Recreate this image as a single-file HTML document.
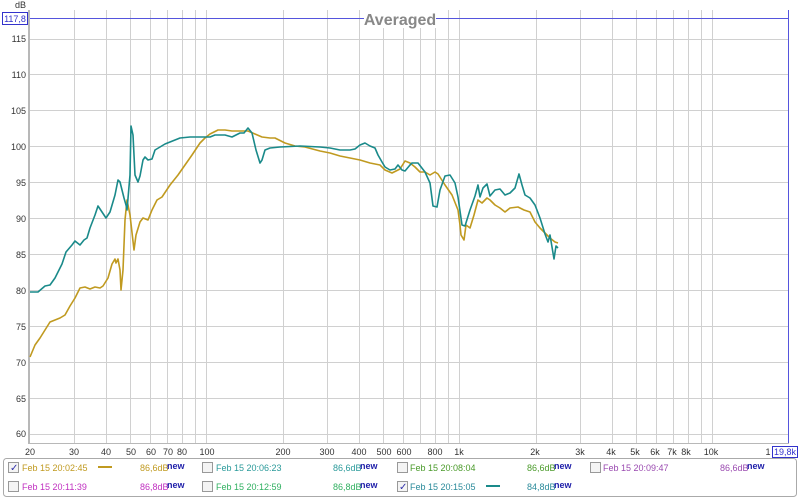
<!DOCTYPE html>
<html><head><meta charset="utf-8"><style>
body{margin:0;width:800px;height:499px;background:#fff;overflow:hidden;font-family:"Liberation Sans",Arial,sans-serif;}
</style></head><body>
<svg width="800" height="499" xmlns="http://www.w3.org/2000/svg" style="position:absolute;left:0;top:0">
<g stroke="#d0d0d0" stroke-width="1">
<line x1="74.5" y1="10" x2="74.5" y2="443"/><line x1="106.5" y1="10" x2="106.5" y2="443"/><line x1="130.5" y1="10" x2="130.5" y2="443"/><line x1="150.5" y1="10" x2="150.5" y2="443"/><line x1="167.5" y1="10" x2="167.5" y2="443"/><line x1="182.5" y1="10" x2="182.5" y2="443"/><line x1="195.5" y1="10" x2="195.5" y2="443"/><line x1="206.5" y1="10" x2="206.5" y2="443"/><line x1="283.5" y1="10" x2="283.5" y2="443"/><line x1="327.5" y1="10" x2="327.5" y2="443"/><line x1="359.5" y1="10" x2="359.5" y2="443"/><line x1="383.5" y1="10" x2="383.5" y2="443"/><line x1="403.5" y1="10" x2="403.5" y2="443"/><line x1="420.5" y1="10" x2="420.5" y2="443"/><line x1="435.5" y1="10" x2="435.5" y2="443"/><line x1="448.5" y1="10" x2="448.5" y2="443"/><line x1="459.5" y1="10" x2="459.5" y2="443"/><line x1="536.5" y1="10" x2="536.5" y2="443"/><line x1="580.5" y1="10" x2="580.5" y2="443"/><line x1="612.5" y1="10" x2="612.5" y2="443"/><line x1="636.5" y1="10" x2="636.5" y2="443"/><line x1="656.5" y1="10" x2="656.5" y2="443"/><line x1="673.5" y1="10" x2="673.5" y2="443"/><line x1="688.5" y1="10" x2="688.5" y2="443"/><line x1="701.5" y1="10" x2="701.5" y2="443"/><line x1="712.5" y1="10" x2="712.5" y2="443"/>
<line x1="30" y1="39.5" x2="789" y2="39.5"/><line x1="30" y1="74.5" x2="789" y2="74.5"/><line x1="30" y1="110.5" x2="789" y2="110.5"/><line x1="30" y1="146.5" x2="789" y2="146.5"/><line x1="30" y1="182.5" x2="789" y2="182.5"/><line x1="30" y1="218.5" x2="789" y2="218.5"/><line x1="30" y1="254.5" x2="789" y2="254.5"/><line x1="30" y1="290.5" x2="789" y2="290.5"/><line x1="30" y1="326.5" x2="789" y2="326.5"/><line x1="30" y1="362.5" x2="789" y2="362.5"/><line x1="30" y1="398.5" x2="789" y2="398.5"/><line x1="30" y1="434.5" x2="789" y2="434.5"/>
</g>
<line x1="29" y1="10" x2="29" y2="444" stroke="#b8b8b8" stroke-width="2"/>
<line x1="28" y1="443.5" x2="789" y2="443.5" stroke="#b8b8b8" stroke-width="1"/>
<line x1="30" y1="18.5" x2="789" y2="18.5" stroke="#5555dd" stroke-width="1"/>
<line x1="788.5" y1="10" x2="788.5" y2="443" stroke="#5555dd" stroke-width="1"/>
<rect x="364" y="10" width="72" height="18" fill="#fff"/>
<text x="400" y="25" text-anchor="middle" font-size="16" font-weight="bold" fill="#888">Averaged</text>
<g font-size="9" fill="#333" text-anchor="end">
<text x="26" y="8" >dB</text>
<text x="26" y="42">115</text><text x="26" y="78">110</text><text x="26" y="114">105</text><text x="26" y="150">100</text><text x="26" y="186">95</text><text x="26" y="222">90</text><text x="26" y="258">85</text><text x="26" y="294">80</text><text x="26" y="330">75</text><text x="26" y="366">70</text><text x="26" y="402">65</text><text x="26" y="437">60</text>
</g>
<rect x="2.5" y="12.5" width="25" height="12" fill="#fff" stroke="#3333cc"/>
<text x="15" y="22" text-anchor="middle" font-size="9" fill="#3333cc">117,8</text>
<g font-size="9" fill="#333" text-anchor="middle">
<text x="30" y="455">20</text><text x="74" y="455">30</text><text x="106" y="455">40</text><text x="131" y="455">50</text><text x="151" y="455">60</text><text x="168" y="455">70</text><text x="182" y="455">80</text><text x="207" y="455">100</text><text x="283" y="455">200</text><text x="327" y="455">300</text><text x="359" y="455">400</text><text x="384" y="455">500</text><text x="404" y="455">600</text><text x="435" y="455">800</text><text x="459" y="455">1k</text><text x="535" y="455">2k</text><text x="580" y="455">3k</text><text x="611" y="455">4k</text><text x="635" y="455">5k</text><text x="655" y="455">6k</text><text x="672" y="455">7k</text><text x="686" y="455">8k</text><text x="711" y="455">10k</text><text x="768" y="455">1</text>
</g>
<rect x="772.5" y="446.5" width="25" height="11" fill="#fff" stroke="#3333cc"/>
<text x="785" y="455" text-anchor="middle" font-size="9" fill="#3333cc">19,8k</text>
<polyline fill="none" stroke="#c09a20" stroke-width="1.6" stroke-linejoin="round" points="30,357 35,345 40,338 45,330 50,322 55,320 60,318 65,315 70,306 75,298 80,288 85,287 90,289 95,287 100,288 103,286 108,278 112,264 115,259 116,263 118,259 120,270 121,290 123,270 125,220 127,200 130,215 134,250 136,235 140,222 143,218 148,220 152,210 157,200 162,197 170,185 178,175 185,165 192,155 200,143 205,138 210,134 218,130 225,130 232,131 240,131 248,131 255,134 262,137 270,138 275,138 285,143 295,146 305,147 320,151 330,153 340,156 350,158 360,160 370,163 380,165 385,170 392,173 400,169 405,161 410,163 415,167 420,172 425,172 430,175 435,172 438,174 445,185 452,195 458,210 460,225 461,235 464,240 466,225 470,228 474,215 478,200 482,203 487,198 490,200 495,205 500,208 505,212 510,208 518,207 524,210 530,212 535,222 540,228 545,233 550,238 555,242 558,243"/>
<polyline fill="none" stroke="#1a8a8a" stroke-width="1.6" stroke-linejoin="round" points="30,292 38,292 45,286 50,285 55,278 62,264 66,252 72,245 75,241 80,245 84,240 87,238 90,228 95,215 98,206 100,209 104,215 106,218 110,212 115,195 118,180 120,182 124,198 126,205 127,210 130,175 131,126 133,135 135,175 138,182 140,176 143,160 145,157 148,160 152,159 155,150 160,147 165,144 170,142 175,140 180,138 190,137 195,137 200,137 210,137 215,135 225,135 232,137 240,133 244,133 248,128 252,133 256,150 260,163 262,160 265,150 270,148 280,147 300,146 320,147 330,148 340,150 350,150 355,149 360,145 365,143 370,146 375,148 378,155 382,162 385,167 390,170 395,169 398,165 402,170 405,171 410,165 412,163 418,163 425,172 430,183 433,206 437,207 440,190 445,176 450,175 455,183 458,197 462,225 465,226 470,210 475,196 478,185 480,197 483,188 487,184 490,196 495,190 500,189 505,195 510,193 515,188 519,174 522,185 525,195 530,198 535,205 540,218 545,234 548,242 550,235 552,247 554,259 556,246 558,248"/>
<rect x="3.5" y="458.5" width="793" height="38" rx="3" fill="#fff" stroke="#aaa"/>
<g font-size="9">
<g stroke="#999" fill="#f4f4f4"><rect x="8.5" y="462.5" width="10" height="10"/><rect x="202.5" y="462.5" width="10" height="10"/><rect x="397.5" y="462.5" width="10" height="10"/><rect x="590.5" y="462.5" width="10" height="10"/><rect x="8.5" y="481.5" width="10" height="10"/><rect x="202.5" y="481.5" width="10" height="10"/><rect x="397.5" y="481.5" width="10" height="10"/></g>
<text x="10" y="471" font-size="10" fill="#3333aa">✓</text><text x="399" y="490" font-size="10" fill="#3333aa">✓</text>
<text x="22" y="471" fill="#c09a20">Feb 15 20:02:45</text><line x1="98" y1="467" x2="112" y2="467" stroke="#c09a20" stroke-width="2"/><text x="140" y="471" fill="#c09a20">86,6dB</text><text x="167" y="469" fill="#2020aa" font-weight="bold">new</text>
<text x="216" y="471" fill="#2a9a9a">Feb 15 20:06:23</text><text x="333" y="471" fill="#2a9a9a">86,6dB</text><text x="360" y="469" fill="#2020aa" font-weight="bold">new</text>
<text x="410" y="471" fill="#4a9a2a">Feb 15 20:08:04</text><text x="527" y="471" fill="#4a9a2a">86,6dB</text><text x="554" y="469" fill="#2020aa" font-weight="bold">new</text>
<text x="603" y="471" fill="#9a4ab0">Feb 15 20:09:47</text><text x="720" y="471" fill="#9a4ab0">86,6dB</text><text x="747" y="469" fill="#2020aa" font-weight="bold">new</text>
<text x="22" y="490" fill="#c030c0">Feb 15 20:11:39</text><text x="140" y="490" fill="#c030c0">86,8dB</text><text x="167" y="488" fill="#2020aa" font-weight="bold">new</text>
<text x="216" y="490" fill="#30b060">Feb 15 20:12:59</text><text x="333" y="490" fill="#30b060">86,8dB</text><text x="360" y="488" fill="#2020aa" font-weight="bold">new</text>
<text x="410" y="490" fill="#2a8a9a">Feb 15 20:15:05</text><line x1="486" y1="486" x2="500" y2="486" stroke="#1a8a8a" stroke-width="2"/><text x="527" y="490" fill="#2a8a9a">84,8dB</text><text x="554" y="488" fill="#2020aa" font-weight="bold">new</text>
</g>
</svg>
</body></html>
